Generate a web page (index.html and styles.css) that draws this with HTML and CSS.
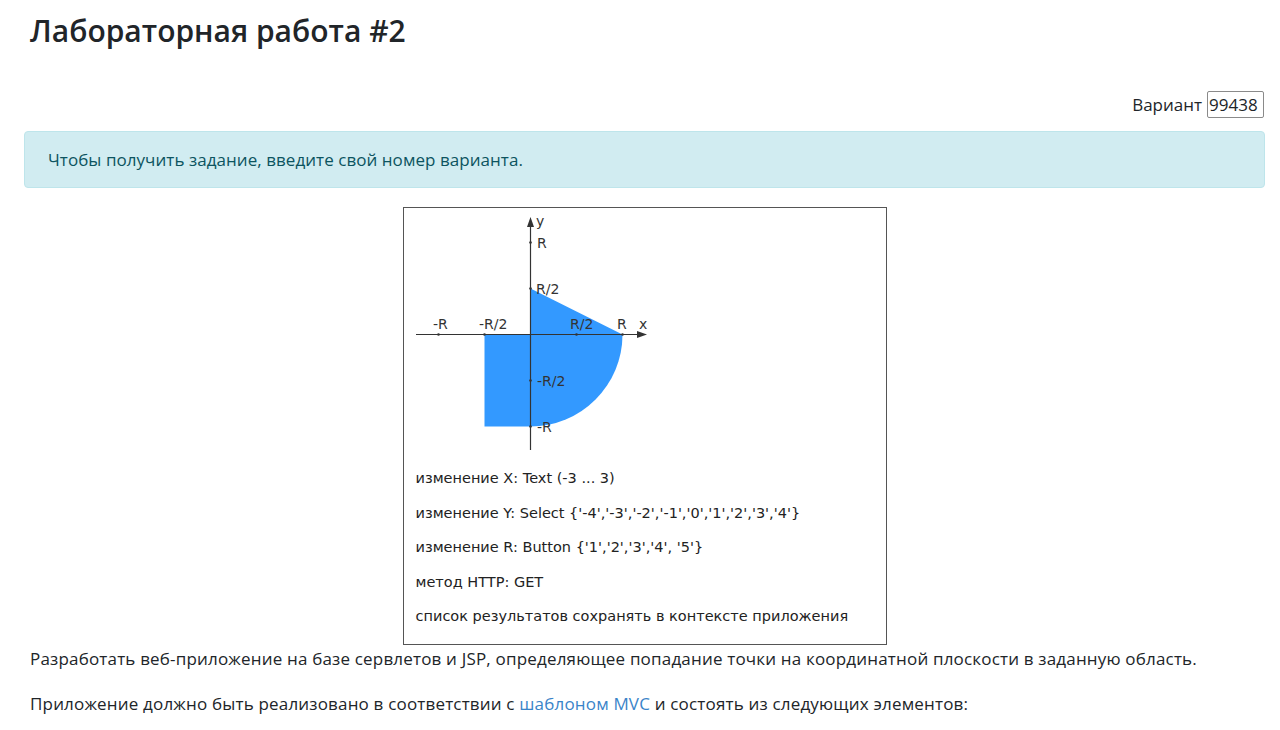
FILE: index.html
```html
<!DOCTYPE html>
<html lang="ru">
<head>
<meta charset="utf-8">
<title>Лабораторная работа #2</title>
<link rel="stylesheet" href="styles.css">
</head>
<body>
<div class="page">
  <h1 class="title">Лабораторная работа #2</h1>
  <div class="variant">
    <label class="variant-label" for="variant">Вариант</label>
    <input class="variant-input" id="variant" type="text" value="99438">
  </div>
  <div class="alert">Чтобы получить задание, введите свой номер варианта.</div>
  <div class="figure-wrap">
    <div class="figure">
      <svg class="graph" width="482" height="253" viewBox="0 0 482 253">
        <g fill="#3399ff">
          <polygon points="126.5,80.5 218.5,126.5 126.5,126.5"/>
          <path d="M126.5,126.5 L218.5,126.5 A92 92 0 0 1 126.5,218.5 Z"/>
          <rect x="80.5" y="126.5" width="46" height="92"/>
        </g>
        <g stroke="#333" stroke-width="1.2" fill="none">
          <line x1="12" y1="126.5" x2="240" y2="126.5"/>
          <line x1="126.5" y1="242" x2="126.5" y2="12"/>
        </g>
        <g fill="#333">
          <polygon points="243,126.5 233,123 233,130"/>
          <polygon points="126.5,9 123,19 130,19"/>
          <circle cx="34.5" cy="126.5" r="1.3"/>
          <circle cx="80.5" cy="126.5" r="1.3"/>
          <circle cx="172.5" cy="126.5" r="1.3"/>
          <circle cx="218.5" cy="126.5" r="1.3"/>
          <circle cx="126.5" cy="34.5" r="1.3"/>
          <circle cx="126.5" cy="80.5" r="1.3"/>
          <circle cx="126.5" cy="172.5" r="1.3"/>
          <circle cx="126.5" cy="218.5" r="1.3"/>
        </g>
        <g class="labels" fill="#333">
          <text x="132" y="18">y</text>
          <text x="133" y="40">R</text>
          <text x="132" y="86">R/2</text>
          <text x="29" y="121">-R</text>
          <text x="75" y="121">-R/2</text>
          <text x="166" y="121">R/2</text>
          <text x="213" y="121">R</text>
          <text x="235" y="121">x</text>
          <text x="133" y="178">-R/2</text>
          <text x="133" y="224">-R</text>
        </g>
      </svg>
      <ul class="spec">
        <li>изменение X: Text (-3 ... 3)</li>
        <li>изменение Y: Select {'-4','-3','-2','-1','0','1','2','3','4'}</li>
        <li>изменение R: Button {'1','2','3','4', '5'}</li>
        <li>метод HTTP: GET</li>
        <li>список результатов сохранять в контексте приложения</li>
      </ul>
    </div>
  </div>
  <p class="text">Разработать веб-приложение на базе сервлетов и JSP, определяющее попадание точки на координатной плоскости в заданную область.</p>
  <p class="text">Приложение должно быть реализовано в соответствии с <a class="link" href="#">шаблоном MVC</a> и состоять из следующих элементов:</p>
</div>
</body>
</html>
```
FILE: styles.css
```css
html, body {
  margin: 0;
  padding: 0;
  background: #fff;
}
body {
  font-family: "Open Sans", "Noto Sans", "Liberation Sans", sans-serif;
  font-size: 17px;
  letter-spacing: 0.1px;
  line-height: 24px;
  color: #212529;
}
.page {
  padding: 0 15px 0 24px;
}
.title {
  margin: 0;
  padding: 12px 0 0 6px;
  font-size: 30px;
  font-weight: 600;
  letter-spacing: 0;
  line-height: 38px;
  color: #212529;
}
.variant {
  display: flex;
  justify-content: flex-end;
  align-items: center;
  gap: 5px;
  margin-top: 41px;
}
.variant-label {
  letter-spacing: 0;
}
.variant-input {
  width: 57px;
  height: 27px;
  box-sizing: border-box;
  border: 1px solid #8a8a8a;
  border-radius: 2px;
  padding: 0 1px;
  font-family: inherit;
  font-size: 17px;
  letter-spacing: 0;
  color: #212529;
  margin-right: 1px;
}
.alert {
  margin-top: 13px;
  padding: 16px 23px 15px;
  background: #d1ecf1;
  border: 1px solid #bee5eb;
  border-radius: 4px;
  color: #0c5460;
  line-height: 24px;
  letter-spacing: 0.05px;
}
.figure-wrap {
  display: flex;
  justify-content: center;
  margin-top: 19px;
}
.figure {
  width: 482px;
  height: 436px;
  border: 1px solid #555;
  background: #fff;
}
.graph {
  display: block;
}
.labels text {
  font-family: "DejaVu Sans", sans-serif;
  font-size: 14px;
  letter-spacing: 0;
}
.spec {
  list-style: none;
  margin: 0;
  padding: 0 0 0 12px;
  font-family: "DejaVu Sans", sans-serif;
  font-size: 14.5px;
  letter-spacing: 0;
  line-height: 34.5px;
  color: #222;
}
.text {
  margin: 2px 0 21px 6px;
  letter-spacing: 0.18px;
}
.link {
  color: #3a84c9;
  text-decoration: none;
}
```
